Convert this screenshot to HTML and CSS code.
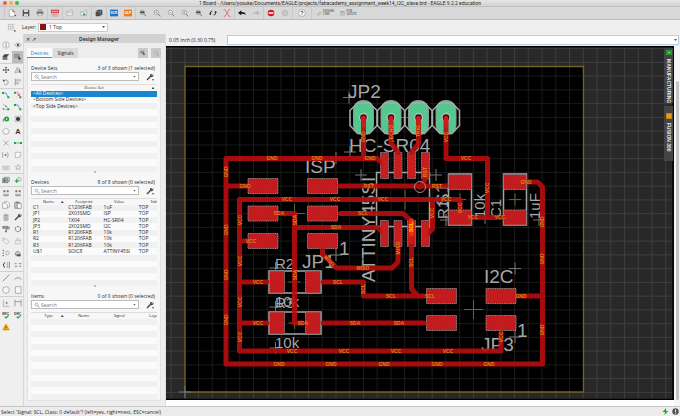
FILE: index.html
```html
<!DOCTYPE html>
<html lang="en">
<head>
<meta charset="utf-8">
<title>1 Board - EAGLE 9.2.2 education</title>
<link rel="stylesheet" href="styles.css">
</head>
<body>
<svg class="defs" aria-hidden="true">
  <defs>
    <symbol id="doc" viewBox="0 0 12 12"><path d="M2 1h5l3 3v7H2z" fill="#fafafa" stroke="#888" stroke-width=".7"/><path d="M7 1v3h3" fill="none" stroke="#555"/><path d="M9.500 9l2.500 0-1.200 2z" fill="#222"/></symbol>
    <symbol id="save" viewBox="0 0 12 12"><path d="M1 1h9l1 1v9H1z" fill="#555"/><path d="M3 1h6v3.500H3zM3 7h6v4H3z" fill="#d8d8d8"/></symbol>
    <symbol id="print" viewBox="0 0 12 12"><path d="M3 1h6v3H3z" fill="#bbb" stroke="#777" stroke-width=".6"/><path d="M1 4h10v4H1z" fill="#777"/><path d="M3 7h6v3H3z" fill="#eee" stroke="#777" stroke-width=".6"/></symbol>
    <symbol id="cam" viewBox="0 0 12 12"><path d="M0 1h12v5H0z" fill="#d8434a"/><path d="M2 2.500h2v2H2zM5 2.500h2v2H5zM8 2.500h2v2H8z" fill="#f2d2d2"/><path d="M1 6h10v5H1z" fill="#e6dada" stroke="#c88" stroke-width=".6"/><path d="M4 6v5M7.500 6v5M1 8.500h10" stroke="#c55" stroke-width=".6"/></symbol>
    <symbol id="folder" viewBox="0 0 12 12"><path d="M1 10V4l6-1 1-2 2 1v8z" fill="#e6e6e6" stroke="#999" stroke-width=".7"/><path d="M1 5h9" stroke="#aaa" stroke-width=".6"/></symbol>
    <symbol id="foldergo" viewBox="0 0 12 12"><use href="#folder"/><path d="M5 6l4 2.200L5 10.500z" fill="#1ca04c"/></symbol>
    <symbol id="book" viewBox="0 0 12 12"><path d="M1 4l3-3h7v7l-3 3H1z" fill="#4a4a4a"/><path d="M1 4h7v7M8 4l3-3" fill="none" stroke="#bbb" stroke-width=".6"/></symbol>
    <symbol id="scr" viewBox="0 0 12 12"><path d="M0 1h12v10H0z" fill="#1c75c4"/><text x="6" y="8" class="tag">SCR</text></symbol>
    <symbol id="ulp" viewBox="0 0 12 12"><path d="M0 1h12v10H0z" fill="#ee7d1c"/><text x="6" y="8" class="tag">ULP</text></symbol>
    <symbol id="zoom" viewBox="0 0 12 12"><circle cx="5" cy="5" r="3.300" fill="#eee" stroke="#777" stroke-width=".8"/><path d="M7.500 7.500L11 11" stroke="#666" stroke-width="1.200"/></symbol>
    <symbol id="zoomfit" viewBox="0 0 12 12"><use href="#zoom"/><path d="M2 3.500h6v3H2z" fill="#444"/></symbol>
    <symbol id="zoomin" viewBox="0 0 12 12"><use href="#zoom"/><path d="M3.500 5h3M5 3.500v3" stroke="#666" stroke-width=".7"/></symbol>
    <symbol id="zoomout" viewBox="0 0 12 12"><use href="#zoom"/><path d="M3.500 5h3" stroke="#666" stroke-width=".7"/></symbol>
    <symbol id="refresh" viewBox="0 0 12 12"><path d="M2 8V6a3 3 0 0 1 3-3M10 4v2a3 3 0 0 1-3 3" fill="none" stroke="#333" stroke-width="1.400"/><path d="M0 6.500h4L2 9.500zM8 5.500h4L10 2.500z" fill="#333"/></symbol>
    <symbol id="rats" viewBox="0 0 12 12"><path d="M1 1h2l6 10h2M1 11h2L9 1h2" fill="none" stroke="#e0584f" stroke-width="1.100"/></symbol>
    <symbol id="undo" viewBox="0 0 12 12"><path d="M0 6l5-4v2.500c4 0 6 1 7 4.500-2-2-4-2-7-2V9.500z" fill="#111"/></symbol>
    <symbol id="redo" viewBox="0 0 12 12"><path d="M12 6L7 2v2.500C3 4.500 1 5.500 0 9c2-2 4-2 7-2v2.500z" fill="#bbb"/></symbol>
    <symbol id="stop" viewBox="0 0 12 12"><circle cx="6" cy="6" r="5" fill="#d9131f"/><path d="M2.500 4.800h7v2.400h-7z" fill="#fff"/></symbol>
    <symbol id="go" viewBox="0 0 12 12"><circle cx="6" cy="6" r="4.500" fill="#c6c6c6" stroke="#b5b5b5"/></symbol>
    <symbol id="help" viewBox="0 0 12 12"><circle cx="6" cy="6" r="5" fill="#fff" stroke="#777" stroke-width=".7"/><text x="6" y="9" class="qm">?</text></symbol>
    <symbol id="grid" viewBox="0 0 12 12"><path d="M2 1v9M5 1v9M8 1v9M1 2h9M1 5h9M1 8h9" stroke="#c2c2c2" stroke-width="1"/><path d="M9 10h3l-1.500 2z" fill="#222"/></symbol>
    <symbol id="link" viewBox="0 0 12 12"><path d="M2 9l3-3M5 4l3-2 2 2-2 3-2 1M6 5L3 6 1 9l2 2 3-2" fill="none" stroke="#888" stroke-width=".9"/></symbol>
    <symbol id="sheet" viewBox="0 0 12 12"><path d="M1 1h10v2H1z" fill="#777"/><path d="M1 3v8h10V3M1 6h10M1 8.500h10M4.500 3v8" fill="none" stroke="#999" stroke-width=".7"/></symbol>
    <symbol id="info" viewBox="0 0 12 12"><circle cx="6" cy="6" r="4.800" fill="#fafafa" stroke="#777" stroke-width=".7"/><path d="M6 3v1.200M6 5.200V9" stroke="#444" stroke-width="1"/></symbol>
    <symbol id="eye" viewBox="0 0 12 12"><path d="M1 6q5-6 10 0-5 6-10 0z" fill="#eee" stroke="#777" stroke-width=".7"/><circle cx="6" cy="6" r="1.900" fill="#555"/></symbol>
    <symbol id="layers" viewBox="0 0 12 12"><path d="M1 5l3-3h7L8 5zM1 5h7v5H1z" fill="#444"/><path d="M1 7l7 0 3-3M1 9h7" fill="none" stroke="#ddd" stroke-width=".7"/></symbol>
    <symbol id="pick" viewBox="0 0 12 12"><path d="M1 2h7v5H1z" fill="#999" stroke="#777" stroke-width=".7"/><path d="M6 5l5 4-2.500.2L7.500 11z" fill="#222"/></symbol>
    <symbol id="move" viewBox="0 0 12 12"><path d="M6 2v8M2 6h8" stroke="#333" stroke-width="1"/><path d="M4.500 3L6 1l1.500 2zM4.500 9L6 11l1.500-2zM3 4.500L1 6l2 1.500zM9 4.500L11 6 9 7.500z" fill="#333"/></symbol>
    <symbol id="mirror" viewBox="0 0 12 12"><path d="M5 2v8H1z" fill="#ddd" stroke="#777" stroke-width=".6"/><path d="M7 2v8h4z" fill="#777"/></symbol>
    <symbol id="rotate" viewBox="0 0 12 12"><path d="M3 4a3.600 3.600 0 1 1 0 5" fill="none" stroke="#777" stroke-width="1"/><path d="M1 2l1 4 3-2z" fill="#555"/></symbol>
    <symbol id="align" viewBox="0 0 12 12"><path d="M2 1v10" stroke="#777"/><path d="M3 2.500h7v2H3zM3 7h4v2H3z" fill="#ddd" stroke="#888" stroke-width=".6"/></symbol>
    <symbol id="route" viewBox="0 0 12 12"><path d="M2 3h4l3 6" fill="none" stroke="#2c8fc0" stroke-width="1.100"/><path d="M0 1.500h3v3H0zM8 8h3v3H8z" fill="#19a63b"/></symbol>
    <symbol id="ripup" viewBox="0 0 12 12"><path d="M2 2h4l3 6" fill="none" stroke="#999"/><path d="M0 1h3v3H0zM8 8h3v3H8z" fill="#19a63b"/><path d="M5 4l4 4M9 4L5 8" stroke="#d22"/></symbol>
    <symbol id="fan" viewBox="0 0 12 12"><path d="M2 2l4 3M2 9l7 1M6 5l3 3" fill="none" stroke="#777" stroke-width=".8"/><path d="M5 4h2v2H5zM8 8h3v3H8z" fill="#19a63b"/><path d="M1 8h2v2H1z" fill="#2c7fd0"/></symbol>
    <symbol id="via" viewBox="0 0 12 12"><path d="M2 10Q1 4 6 5" fill="none" stroke="#d33" stroke-width="1.200"/><circle cx="7" cy="6" r="3.800" fill="#19a63b"/><circle cx="7" cy="6" r="1.200" fill="#fff"/></symbol>
    <symbol id="hole" viewBox="0 0 12 12"><path d="M1.500 1.500h9v9h-9z" fill="#ddd" stroke="#999" stroke-width=".6"/><circle cx="6" cy="6" r="3" fill="#333"/></symbol>
    <symbol id="poly" viewBox="0 0 12 12"><path d="M6 1.500l5 3.800-2 5.200H3L1 5.300z" fill="#f6f6f6" stroke="#888" stroke-width=".8"/></symbol>
    <symbol id="text" viewBox="0 0 12 12"><text x="6" y="10" class="bigA">A</text></symbol>
    <symbol id="split" viewBox="0 0 12 12"><path d="M2 2l3 3h2l3-3M2 10l3-3h2l3 3M6 5v2" fill="none" stroke="#888" stroke-width=".9"/></symbol>
    <symbol id="wire" viewBox="0 0 12 12"><path d="M2 6h8" stroke="#19a63b"/><path d="M0 4.500h3v3H0zM9 4.500h3v3H9z" fill="#19a63b"/></symbol>
    <symbol id="paren" viewBox="0 0 12 12"><path d="M1 2v8M3 6h3M8 2q3 4 0 8" fill="none" stroke="#777" stroke-width=".9"/><path d="M5 4.500L7.500 6 5 7.500z" fill="#555"/></symbol>
    <symbol id="miter" viewBox="0 0 12 12"><path d="M2 2h8v4l-4 4H2z" fill="#f6f6f6" stroke="#888" stroke-width=".7"/><path d="M6 10h4V6" fill="none" stroke="#aaa" stroke-width=".6"/></symbol>
    <symbol id="mesh" viewBox="0 0 12 12"><path d="M1 9V5h3v4M6 9V3M8 9V5h3v4M1 10h10" fill="none" stroke="#999" stroke-width=".8"/></symbol>
    <symbol id="star" viewBox="0 0 12 12"><path d="M6 2l1.300 2.800 3 .3-2.200 2 .7 3L6 8.500 3.200 10l.7-3-2.200-2 3-.2z" fill="#eee" stroke="#888" stroke-width=".7"/></symbol>
    <symbol id="addstack" viewBox="0 0 12 12"><path d="M3 2h8v6H3z" fill="#eee" stroke="#555" stroke-width=".8"/><path d="M1 4h8v6H1z" fill="#aaa" stroke="#555" stroke-width=".8"/><path d="M4 4.500v5M1.500 7h5" stroke="#19a63b" stroke-width="1.500"/></symbol>
    <symbol id="addpart" viewBox="0 0 12 12"><path d="M6 2q5 0 5 3t-5 3z" fill="#eee" stroke="#888" stroke-width=".8"/><path d="M4 4.500v6M1 7.500h6" stroke="#19a63b" stroke-width="1.500"/></symbol>
    <symbol id="names" viewBox="0 0 12 12"><path d="M2 2h3v3H2zM7 2h3v3H7z" fill="#777"/><path d="M2 8h2M5 8h2M8 8h2M2 10h8" stroke="#555"/></symbol>
    <symbol id="copy" viewBox="0 0 12 12"><path d="M4 1h4l3 3v5H4z" fill="#fafafa" stroke="#777" stroke-width=".8"/><path d="M1 3h4l3 3v5H1z" fill="#fafafa" stroke="#777" stroke-width=".8"/></symbol>
    <symbol id="paste" viewBox="0 0 12 12"><path d="M1 2h8v9H1z" fill="#bbb" stroke="#777" stroke-width=".8"/><path d="M5 4h6v7H5z" fill="#fafafa" stroke="#777" stroke-width=".8"/><path d="M3 1h4v2H3z" fill="#777"/></symbol>
    <symbol id="trash" viewBox="0 0 12 12"><path d="M3 4h6v7H3z" fill="#ddd" stroke="#777" stroke-width=".8"/><path d="M2 3h8M5 1.500h2M5 5v5M7 5v5" stroke="#777" stroke-width=".8"/></symbol>
    <symbol id="wrench" viewBox="0 0 12 12"><path d="M1.500 10.500L7 5" stroke="#444" stroke-width="2"/><path d="M10 1L8 3l1 1 2-2q1 3-1.500 4T6 4t4-3z" fill="#444"/></symbol>
    <symbol id="options" viewBox="0 0 12 12"><use href="#wrench"/><path d="M9 9.500h3l-1.500 2z" fill="#222"/></symbol>
    <symbol id="paint" viewBox="0 0 12 12"><path d="M1 2h8v3H1z" fill="#999" stroke="#555" stroke-width=".7"/><path d="M9 3h2v3H6v2" fill="none" stroke="#555" stroke-width=".8"/><path d="M5 8h2v3H5z" fill="#444"/></symbol>
    <symbol id="group" viewBox="0 0 12 12"><circle cx="6" cy="6" r="4" fill="none" stroke="#444" stroke-width="1.200" stroke-dasharray="3 1.200"/></symbol>
    <symbol id="tagic" viewBox="0 0 12 12"><path d="M1 2l4 0 6 5-4 4-6-5z" fill="#eee" stroke="#aaa" stroke-width=".8"/><circle cx="3.500" cy="4" r=".8" fill="#999"/></symbol>
    <symbol id="lock" viewBox="0 0 12 12"><path d="M2.500 5h7v5.500h-7z" fill="#eee" stroke="#aaa" stroke-width=".8"/><path d="M4 5V3q2-3 4 0v2" fill="none" stroke="#aaa" stroke-width=".9"/></symbol>
    <symbol id="swap" viewBox="0 0 12 12"><path d="M1 2h2M1 6h2M1 10h2" stroke="#333" stroke-width="1.200"/><path d="M6 3q5 0 5 3t-5 3z" fill="none" stroke="#888" stroke-width=".8"/></symbol>
    <symbol id="replace" viewBox="0 0 12 12"><path d="M2 9V6q4-5 7 0v4z" fill="#ccc" stroke="#555" stroke-width=".8"/><path d="M4 8h6v3H4z" fill="#555"/></symbol>
    <symbol id="pins" viewBox="0 0 12 12"><path d="M4 2q-4 4 0 8" fill="none" stroke="#222" stroke-width="1.300"/><path d="M7 3h2M7 6h2M7 9h2M11 1v10" stroke="#555"/></symbol>
    <symbol id="dashes" viewBox="0 0 12 12"><path d="M1 4h3M7 4h4M1 8h4M8 8h3" stroke="#666" stroke-width="1.100"/></symbol>
    <symbol id="line" viewBox="0 0 12 12"><path d="M1 11L11 1" stroke="#666" stroke-width="1"/></symbol>
    <symbol id="arc" viewBox="0 0 12 12"><path d="M1 8q5-5 10 0" fill="none" stroke="#666" stroke-width="1"/></symbol>
    <symbol id="circ" viewBox="0 0 12 12"><circle cx="6" cy="6" r="5" fill="#f6f6f6" stroke="#888" stroke-width=".9"/></symbol>
    <symbol id="rect" viewBox="0 0 12 12"><path d="M2 1h8.500v10H2z" fill="#f6f6f6" stroke="#888" stroke-width=".9"/></symbol>
    <symbol id="mark" viewBox="0 0 12 12"><path d="M2 1v10h9" fill="none" stroke="#888" stroke-width=".8"/><path d="M7 4v4M5 6h4" stroke="#666" stroke-width=".9"/></symbol>
    <symbol id="dim" viewBox="0 0 12 12"><path d="M1.500 1v10M10.500 1v10M2 4h8" stroke="#666" stroke-width=".9"/></symbol>
    <symbol id="erc" viewBox="0 0 12 12"><text x="5.500" y="6" class="rc">ERC</text><path d="M4 8.500l2 2 4-4" fill="none" stroke="#19a63b" stroke-width="1.800"/></symbol>
    <symbol id="drc" viewBox="0 0 12 12"><text x="5.500" y="6" class="rc">DRC</text><path d="M4 8.500l2 2 4-4" fill="none" stroke="#19a63b" stroke-width="1.800"/></symbol>
    <symbol id="warn" viewBox="0 0 12 12"><path d="M6 1.500l5 9H1z" fill="#f5a800" stroke="#e09000" stroke-width="1"/><path d="M6 4.500v3M6 8.500v1" stroke="#333" stroke-width="1"/></symbol>
    <symbol id="bolt" viewBox="0 0 12 12"><path d="M7 0L1 7h4l-1 5 7-7H7z" fill="#22a83c"/></symbol>
    <symbol id="alert" viewBox="0 0 12 12"><circle cx="6" cy="6" r="5.500" fill="#555"/><path d="M6 2.500v4.500M6 8v1.800" stroke="#fff" stroke-width="1.500"/></symbol>
    <pattern id="hatch" width="2" height="2" patternUnits="userSpaceOnUse" patternTransform="rotate(45)"><path d="M0 0h2v2H0z" fill="#c91f22"/><path d="M0 0v2" stroke="#ad1113" stroke-width="1"/></pattern>
    <pattern id="green" width="2" height="2" patternUnits="userSpaceOnUse" patternTransform="rotate(45)"><path d="M0 0h2v2H0z" fill="#5fcf97"/><path d="M0 0v2" stroke="#32b078" stroke-width="1"/></pattern>
    <pattern id="mesh14" x="184.300" y="61.900" width="13.740" height="13.750" patternUnits="userSpaceOnUse"><path d="M.5 0v13.750M0 .5h13.740" stroke="#fff" stroke-opacity=".1" stroke-width="1" fill="none"/></pattern>
    <path id="smd" d="M-15 -7.500h30v15h-30z"/>
    <path id="soic" d="M-4 -13h8v26h-8z"/>
    <path id="chipH" d="M-8 -11h15v22h-15z"/>
    <path id="chipV" d="M-11.500 -7.500h23v15h-23z"/>
    <g id="pin"><rect x="-10" y="-17" width="20" height="34" rx="9" fill="url(#green)" stroke="#8a9a90" stroke-width="1"/><path d="M-6-14.500H6L13.500-7V8L6 16H-6L-13.500 8V-7z" fill="none" stroke="#aaa" stroke-width="1.500"/><circle r="4" fill="#201010" stroke="#bbb" stroke-width="1.500"/></g>
    <path id="cross" d="M-6 0H6M0-6V6"/>
  </defs>
</svg>

<div class="app">
  <header class="titlebar">
    <span class="lights"><i class="red"></i><i class="yellow"></i><i class="green"></i></span>
    <h1>1 Board - /Users/yosuke/Documents/EAGLE/projects/fabacademy_assignment_week14_I2C_slave.brd - EAGLE 9.2.2 education</h1>
  </header>

  <nav class="toolbar" aria-label="Main toolbar">
    <div class="group"><button aria-label="New"><svg><use href="#doc"/></svg></button><button aria-label="Save"><svg><use href="#save"/></svg></button><button aria-label="Print"><svg><use href="#print"/></svg></button></div>
    <div class="group"><button aria-label="CAM"><svg><use href="#cam"/></svg></button></div>
    <div class="group"><button aria-label="Open"><svg><use href="#folder"/></svg></button><button aria-label="Switch"><svg><use href="#foldergo"/></svg></button></div>
    <div class="group"><button aria-label="Library"><svg><use href="#book"/></svg></button></div>
    <div class="group"><button aria-label="Script"><svg><use href="#scr"/></svg></button><button aria-label="ULP"><svg><use href="#ulp"/></svg></button></div>
    <div class="group"><button aria-label="Fit"><svg><use href="#zoomfit"/></svg></button><button aria-label="Zoom in"><svg><use href="#zoomin"/></svg></button><button aria-label="Zoom out"><svg><use href="#zoomout"/></svg></button><button aria-label="Redraw"><svg><use href="#zoomin"/></svg></button><button aria-label="Select zoom"><svg><use href="#zoomfit"/></svg></button><button aria-label="Refresh"><svg><use href="#refresh"/></svg></button><button aria-label="Ratsnest"><svg><use href="#rats"/></svg></button></div>
    <div class="group"><button aria-label="Undo"><svg><use href="#undo"/></svg></button><button aria-label="Redo"><svg><use href="#redo"/></svg></button></div>
    <div class="group"><button aria-label="Stop"><svg><use href="#stop"/></svg></button><button aria-label="Go"><svg><use href="#go"/></svg></button></div>
    <div class="group wide"><button aria-label="Help"><svg><use href="#help"/></svg></button></div>
    <div class="group wide"><button class="labelled"><svg><use href="#link"/></svg><span>DESIGN<br>LINK</span></button><button class="labelled"><svg><use href="#sheet"/></svg><span>PCB<br>QUOTE</span></button></div>
  </nav>

  <div class="params">
    <button aria-label="Grid"><svg><use href="#grid"/></svg></button>
    <label for="layer">Layer:</label>
    <span class="layer"><i class="swatch"></i><select id="layer"><option>1 Top</option></select></span>
  </div>

  <div class="main">
    <aside class="palette" aria-label="Tools">
      <div class="tools"><button aria-label="Info"><svg><use href="#info"/></svg></button><button aria-label="Show"><svg><use href="#eye"/></svg></button><button aria-label="Layers"><svg><use href="#layers"/></svg></button><button class="on" aria-label="Select"><svg><use href="#pick"/></svg></button></div>
      <div class="tools"><button aria-label="Move"><svg><use href="#move"/></svg></button><button aria-label="Mirror"><svg><use href="#mirror"/></svg></button><button aria-label="Rotate"><svg><use href="#rotate"/></svg></button><button aria-label="Align"><svg><use href="#align"/></svg></button></div>
      <div class="tools"><button aria-label="Route"><svg><use href="#route"/></svg></button><button aria-label="Ripup"><svg><use href="#ripup"/></svg></button><button aria-label="Fanout"><svg><use href="#fan"/></svg></button><button aria-label="Multi route"><svg><use href="#route"/></svg></button><button aria-label="Via"><svg><use href="#via"/></svg></button><button aria-label="Hole"><svg><use href="#hole"/></svg></button><button aria-label="Polygon"><svg><use href="#poly"/></svg></button><button aria-label="Text"><svg><use href="#text"/></svg></button><button aria-label="Split"><svg><use href="#split"/></svg></button><button aria-label="Signal"><svg><use href="#wire"/></svg></button><button aria-label="Slice"><svg><use href="#paren"/></svg></button><button aria-label="Miter"><svg><use href="#miter"/></svg></button><button aria-label="Meander"><svg><use href="#mesh"/></svg></button><button aria-label="Optimize"><svg><use href="#star"/></svg></button></div>
      <div class="tools"><button aria-label="Add block"><svg><use href="#addstack"/></svg></button><button aria-label="Add part"><svg><use href="#addpart"/></svg></button></div>
      <div class="tools"><button aria-label="Name"><svg><use href="#names"/></svg></button><button aria-label="Value"><svg><use href="#names"/></svg></button><button aria-label="Copy"><svg><use href="#copy"/></svg></button><button aria-label="Paste"><svg><use href="#paste"/></svg></button><button aria-label="Delete"><svg><use href="#trash"/></svg></button><button aria-label="Change"><svg><use href="#wrench"/></svg></button><button aria-label="Paint"><svg><use href="#paint"/></svg></button><button aria-label="Group"><svg><use href="#group"/></svg></button><button aria-label="Attribute"><svg><use href="#tagic"/></svg></button><button aria-label="Lock"><svg><use href="#lock"/></svg></button><button aria-label="Pin swap"><svg><use href="#swap"/></svg></button><button aria-label="Replace"><svg><use href="#replace"/></svg></button><button aria-label="Smash"><svg><use href="#pins"/></svg></button><button aria-label="Arrange"><svg><use href="#dashes"/></svg></button></div>
      <div class="tools"><button aria-label="Line"><svg><use href="#line"/></svg></button><button aria-label="Arc"><svg><use href="#arc"/></svg></button><button aria-label="Circle"><svg><use href="#circ"/></svg></button><button aria-label="Rectangle"><svg><use href="#rect"/></svg></button></div>
      <div class="tools"><button aria-label="Mark"><svg><use href="#mark"/></svg></button><button aria-label="Dimension"><svg><use href="#dim"/></svg></button><button aria-label="ERC"><svg><use href="#erc"/></svg></button><button aria-label="DRC"><svg><use href="#drc"/></svg></button><button aria-label="Errors"><svg><use href="#warn"/></svg></button></div>
    </aside>

    <aside class="manager">
      <div class="caption"><button aria-label="Close">✕</button><button aria-label="Detach">↗</button><h2>Design Manager</h2></div>
      <div class="tabs"><button class="active">Devices</button><button>Signals</button><span class="spacer"></span><button class="sq" aria-label="Pick"><svg><use href="#pick"/></svg></button><button class="sq" aria-label="Zoom to"><svg><use href="#zoomin"/></svg></button></div>
      <div class="sections">
        <section>
          <div class="head"><h3>Device Sets</h3><span>3 of 3 shown (1 selected)</span></div>
          <div class="find"><div class="box"><svg><use href="#zoom"/></svg><input type="search" placeholder="Search" aria-label="Search device sets"><b></b></div><button aria-label="Options"><svg><use href="#options"/></svg></button></div>
          <div class="list"><table>
            <thead><tr><th>Device Set <em>▲</em></th></tr></thead>
            <tbody><tr class="sel"><td>&lt;All Devices&gt;</td></tr><tr><td>&lt;Bottom Side Devices&gt;</td></tr><tr><td>&lt;Top Side Devices&gt;</td></tr><tr><td></td></tr><tr><td></td></tr><tr><td></td></tr><tr><td></td></tr><tr><td></td></tr><tr><td></td></tr><tr><td></td></tr><tr><td></td></tr><tr><td></td></tr><tr><td></td></tr></tbody>
          </table></div>
          <i class="grip"></i>
        </section>
        <section>
          <div class="head"><h3>Devices</h3><span>8 of 8 shown (0 selected)</span></div>
          <div class="find"><div class="box"><svg><use href="#zoom"/></svg><input type="search" placeholder="Search" aria-label="Search devices"><b></b></div><button aria-label="Options"><svg><use href="#options"/></svg></button></div>
          <div class="list"><table class="cols">
            <thead><tr><th>Name <em>▲</em></th><th>Footprint</th><th>Value</th><th>Side</th></tr></thead>
            <tbody>
              <tr><td>C1</td><td>C1206FAB</td><td>1uF</td><td>TOP</td></tr>
              <tr><td>JP1</td><td>2X03SMD</td><td>ISP</td><td>TOP</td></tr>
              <tr><td>JP2</td><td>1X04</td><td>HC-SR04</td><td>TOP</td></tr>
              <tr><td>JP3</td><td>2X02SMD</td><td>I2C</td><td>TOP</td></tr>
              <tr><td>R1</td><td>R1206FAB</td><td>10k</td><td>TOP</td></tr>
              <tr><td>R2</td><td>R1206FAB</td><td>10k</td><td>TOP</td></tr>
              <tr><td>R3</td><td>R1206FAB</td><td>10k</td><td>TOP</td></tr>
              <tr><td>U$1</td><td>SOIC8</td><td>ATTINY45SI</td><td>TOP</td></tr>
              <tr><td colspan="4"></td></tr><tr><td colspan="4"></td></tr><tr><td colspan="4"></td></tr><tr><td colspan="4"></td></tr><tr><td colspan="4"></td></tr>
            </tbody>
          </table></div>
          <i class="grip"></i>
        </section>
        <section>
          <div class="head"><h3>Items</h3><span>0 of 0 shown (0 selected)</span></div>
          <div class="find"><div class="box"><svg><use href="#zoom"/></svg><input type="search" placeholder="Search" aria-label="Search items"><b></b></div><button aria-label="Options"><svg><use href="#options"/></svg></button></div>
          <div class="list"><table class="cols">
            <thead><tr><th>Type <em>▲</em></th><th>Name</th><th>Signal</th><th>Layer</th></tr></thead>
            <tbody><tr><td colspan="4"></td></tr><tr><td colspan="4"></td></tr><tr><td colspan="4"></td></tr><tr><td colspan="4"></td></tr><tr><td colspan="4"></td></tr><tr><td colspan="4"></td></tr><tr><td colspan="4"></td></tr><tr><td colspan="4"></td></tr><tr><td colspan="4"></td></tr><tr><td colspan="4"></td></tr><tr><td colspan="4"></td></tr><tr><td colspan="4"></td></tr><tr><td colspan="4"></td></tr></tbody>
          </table></div>
        </section>
      </div>
    </aside>

    <main class="editor">
      <div class="command"><label for="cmd">0.05 inch (0.30 0.75)</label><div class="cmdbox"><input id="cmd" type="text"><b></b></div></div>
      <div class="work">
        <div class="canvas">
          <svg class="board" viewBox="166 46 508 354" preserveAspectRatio="xMinYMin slice" role="img" aria-label="PCB layout">
            <path d="M166 46h508v354H166z" fill="#282828"/>
            <path d="M185 66h398v326H185z" fill="#000"/>
            <path d="M166 46h508v354H166z" fill="url(#mesh14)"/>
            <path d="M185 66.500h398.500V392H185z" fill="none" stroke="#74611f" stroke-width="1.300"/>
            <path d="M166 46.500h508M673 46v354M166 399.500h508" stroke="#000" stroke-width="1.500"/>

            <g fill="none" stroke="#a5a5a5" stroke-width="1.500">
              <path d="M376.500 172.500h53v54h-53zM269 271h52v22h-52zM269 312h52v22h-52zM448.500 174h23v51h-23zM503.500 174h23v51h-23z"/>
            </g>
            <g stroke="#777" stroke-width="1">
              <use href="#cross" x="349" y="97.500"/><use href="#cross" x="350" y="152"/><use href="#cross" x="361" y="175"/><use href="#cross" x="436" y="175"/><use href="#cross" x="336" y="158"/><use href="#cross" x="336" y="255"/><use href="#cross" x="275.500" y="268"/><use href="#cross" x="275.500" y="307"/><use href="#cross" x="275.500" y="348"/><use href="#cross" x="515" y="268.500"/><use href="#cross" x="515" y="337"/><use href="#cross" x="446" y="220"/><use href="#cross" x="485" y="218"/><use href="#cross" x="539" y="220"/><use href="#cross" x="185" y="392"/>
            </g>
            <g stroke="#5c6a22" stroke-width="1">
              <use href="#cross" x="515" y="199.500"/><use href="#cross" x="460" y="199.500"/><use href="#cross" x="294.500" y="282"/><use href="#cross" x="294.500" y="323"/>
              <path d="M464 309.500h19M473.500 300v19M285 213.500h20M294.500 204v20M405 190v20M395 117.500h20"/>
            </g>
            <g class="silk">
              <text x="348" y="98">JP2</text><text x="349" y="152">HC-SR04</text><text x="305" y="173">ISP</text><text x="302" y="268">JP1</text><text x="339" y="255">1</text><text x="484" y="283">I2C</text><text x="517" y="337">1</text><text x="481" y="351">JP3</text>
              <text transform="translate(375 282) rotate(-90)">ATTINY45SI</text><text transform="translate(449 206) rotate(-90)">S1</text>
            </g>
            <g class="silk small">
              <text x="275" y="269">R2</text><text x="275" y="308">R3</text><text x="275" y="307">10k</text><text x="275" y="348">10k</text>
              <text transform="translate(448 219) rotate(-90)">R1</text><text transform="translate(485 218) rotate(-90)">10k</text><text transform="translate(501 218) rotate(-90)">C1</text><text transform="translate(540 219) rotate(-90)">1uF</text>
            </g>

            <use href="#pin" x="363.500" y="117.500"/><use href="#pin" x="391" y="117.500"/><use href="#pin" x="418.500" y="117.500"/><use href="#pin" x="446" y="117.500"/>

            <g fill="url(#hatch)" stroke="#8f8585" stroke-width="1" stroke-dasharray="1.200 .6">
              <use href="#smd" x="263" y="186"/><use href="#smd" x="263" y="213.500"/><use href="#smd" x="263" y="241"/>
              <use href="#smd" x="322.500" y="186"/><use href="#smd" x="322.500" y="213.500"/><use href="#smd" x="322.500" y="241"/>
              <use href="#smd" x="441.500" y="296"/><use href="#smd" x="441.500" y="323"/><use href="#smd" x="501" y="296"/><use href="#smd" x="501" y="323"/>
              <use href="#chipH" x="277.500" y="282"/><use href="#chipH" x="313.500" y="282"/><use href="#chipH" x="277.500" y="323"/><use href="#chipH" x="313.500" y="323"/>
              <use href="#chipV" x="460" y="182"/><use href="#chipV" x="460" y="217.500"/><use href="#chipV" x="515" y="182"/><use href="#chipV" x="515" y="217.500"/>
              <use href="#soic" x="384.500" y="165.500"/><use href="#soic" x="398" y="165.500"/><use href="#soic" x="411.500" y="165.500"/><use href="#soic" x="425.500" y="165.500"/>
              <use href="#soic" x="384.500" y="233.500"/><use href="#soic" x="398" y="233.500"/><use href="#soic" x="411.500" y="233.500"/><use href="#soic" x="425.500" y="233.500"/>
            </g>

            <g class="trace">
              <path d="M382 163l-5-4.500H226V364h316.500V187l-5-5H528M226 186h21M518 296h24"/>
              <path d="M460 208v-8.500H239.500V351H501V333M239.500 282H267M239.500 323H267M239.500 241H246M432.500 199.500V229l-5 5M446 118v40.500h41.500V217.500M474 217.500h28"/>
              <path d="M340 186H446M420 187l5.500-8M363.500 118v40M391 118v25l7 9M418.500 118v26l-7 8"/>
              <path d="M280 213.500h14.500V323h8M294.500 227.500H378l5 5M340 213.500h63l8.500 7.500V289l6 7M322.500 250v4l14 14H392l6-6V248M323 282h40.500v14H424M323 323H424"/>
            </g>
            <circle cx="420" cy="187" r="5.500" fill="none" stroke="#b98080" stroke-width="1"/>
            <g fill="#c91f22" opacity=".75"><path d="M381.500 155h6v22h-6zM395 155h6v22h-6zM408.500 155h6v22h-6zM422.500 155h6v22h-6zM381.500 223h6v21h-6zM395 223h6v21h-6zM408.500 236h6v8h-6zM422.500 223h6v21h-6z"/></g>
            <g stroke="#cc1c1c" stroke-width="4" stroke-linecap="round"><path d="M363.500 118v8M391 118v8M418.500 118v8M446 118v8"/></g>
            <path d="M411.500 221v13" stroke="#ff2a00" stroke-width="5" stroke-linecap="round"/>

            <g class="net">
              <text x="272" y="160">GND</text><text x="317" y="160">GND</text><text x="370" y="160">GND</text><text x="245" y="188">GND</text><text x="526" y="184">GND</text><text x="521" y="298">GND</text><text x="279" y="366">GND</text><text x="331" y="366">GND</text><text x="384" y="366">GND</text><text x="437" y="366">GND</text><text x="489" y="366">GND</text>
              <text x="287" y="201">VCC</text><text x="335" y="201">VCC</text><text x="383" y="201">VCC</text><text x="446" y="201">VCC</text><text x="466" y="160">VCC</text><text x="473" y="219">VCC</text><text x="500" y="219">VCC</text><text x="251" y="243">VCC</text><text x="258" y="284">VCC</text><text x="258" y="325">VCC</text><text x="292" y="353">VCC</text><text x="344" y="353">VCC</text><text x="396" y="353">VCC</text><text x="448" y="353">VCC</text>
              <text x="279" y="215">SDA</text><text x="336" y="229">SDA</text><text x="303" y="325">SDA</text><text x="355" y="325">SDA</text><text x="399" y="325">SDA</text><text x="338" y="284">SCL</text><text x="391" y="298">SCL</text><text x="430" y="298">SCL</text><text x="363" y="270">MISO</text><text x="369" y="188">RST</text><text x="437" y="188">RST</text><text x="363" y="215">SCL</text>
              <g>
                <text transform="translate(228 172) rotate(-90)">GND</text><text transform="translate(228 230) rotate(-90)">GND</text><text transform="translate(228 275) rotate(-90)">GND</text><text transform="translate(228 320) rotate(-90)">GND</text>
                <text transform="translate(242 220) rotate(-90)">VCC</text><text transform="translate(242 261) rotate(-90)">VCC</text><text transform="translate(242 302) rotate(-90)">VCC</text><text transform="translate(242 337) rotate(-90)">VCC</text>
                <text transform="translate(297 220) rotate(-90)">SDA</text><text transform="translate(297 275) rotate(-90)">SDA</text><text transform="translate(365 289) rotate(-90)">SCL</text><text transform="translate(413 262) rotate(-90)">SCL</text><text transform="translate(400 248) rotate(-90)">MISO</text>
                <text transform="translate(365 137) rotate(-90)">GND</text><text transform="translate(393 132) rotate(-90)">ECHO</text><text transform="translate(420 131) rotate(-90)">TRIG</text><text transform="translate(448 137) rotate(-90)">VCC</text><text transform="translate(427 172) rotate(-90)">RST</text>
                <text transform="translate(434 213) rotate(-90)">VCC</text><text transform="translate(462 208) rotate(-90)">VCC</text><text transform="translate(489 188) rotate(-90)">VCC</text><text transform="translate(544 222) rotate(-90)">GND</text><text transform="translate(544 259) rotate(-90)">GND</text><text transform="translate(544 330) rotate(-90)">GND</text><text transform="translate(503 337) rotate(-90)">VCC</text><text transform="translate(328 262) rotate(45)">MISO</text>
              </g>
              <text class="hot" transform="translate(413 227) rotate(-90)">SCL</text>
            </g>
          </svg>
          <div class="sidetabs">
            <button><i class="chip mfg"></i>MANUFACTURING</button>
            <button><i class="chip fus"></i>FUSION 360</button>
          </div>
        </div>
        <div class="vscroll"><i></i></div>
      </div>
    </main>
  </div>

  <footer class="status"><span>Select 'Signal: SCL, Class: 0 default'? (left=yes, right=next, ESC=cancel)</span><span class="flags"><svg><use href="#bolt"/></svg><svg><use href="#alert"/></svg></span></footer>
</div>
</body>
</html>
```
FILE: styles.css
```css
* { box-sizing: border-box; }
body { margin: 0; font: 5px/6px "Open Sans", "Liberation Sans", sans-serif; color: #2a2a2a; background: #ececec; }
h1, h2, h3 { margin: 0; font-size: inherit; font-weight: normal; }
button, input, select { font: inherit; color: inherit; margin: 0; padding: 0; border: 0; background: none; border-radius: 0; appearance: none; outline: 0; }
svg { display: block; }
i, em { font-style: normal; }
.defs { position: absolute; width: 0; height: 0; }
.tag { font: bold 5px "Liberation Sans", sans-serif; fill: #fff; text-anchor: middle; }
.qm { font: bold 8px "Liberation Sans", sans-serif; fill: #444; text-anchor: middle; }
.bigA { font: bold 11px "Liberation Sans", sans-serif; fill: #333; text-anchor: middle; }
.rc { font: bold 5px "Liberation Sans", sans-serif; fill: #444; text-anchor: middle; }

.app { display: flex; flex-direction: column; height: 100vh; }
.titlebar { display: flex; align-items: center; justify-content: center; height: 7px; background: linear-gradient(#e6e6e6, #d2d2d2); border-bottom: 1px solid #c0c0c0; position: relative; font-family: Roboto, "Liberation Sans", sans-serif; }
.lights { position: absolute; left: 3px; top: 1px; display: flex; gap: 2px; }
.lights i { width: 4px; height: 4px; border-radius: 50%; }
.red { background: #f4574f; }
.yellow { background: #f5b42c; }
.green { background: #34c240; }

.toolbar { display: flex; height: 13px; padding-left: 4px; background: #d8d8d8; border-bottom: 1px solid #bdbdbd; }
.group { display: flex; align-items: center; border-left: 1px solid #c8c8c8; }
.group button { width: 14px; height: 12px; display: flex; align-items: center; justify-content: center; }
.group svg { width: 8px; height: 8px; }
.group.wide { padding: 0 2px; }
.group button.labelled { width: 23px; gap: 1px; font-size: 3px; line-height: 3px; text-align: left; }
.group .labelled svg { width: 5px; height: 5px; }

.params { display: flex; align-items: center; height: 14px; gap: 6px; padding-left: 7px; background: #efefef; }
.params button svg { width: 9px; height: 9px; }
.layer { display: flex; align-items: center; width: 70px; height: 9px; margin-left: -4px; background: #fff; border: 1px solid #ccc; padding: 0 2px 0 1px; }
.layer::after, .box b, .cmdbox b { content: ""; width: 3px; height: 2px; background: #555; clip-path: polygon(0 0, 100% 0, 50% 100%); }
.swatch { width: 6px; height: 6px; background: #8e1010; margin-right: 3px; }
.layer select { flex: 1; }

.main { flex: 1; display: flex; min-height: 0; }
.palette { width: 24px; padding-top: 5px; background: #efefef; border-right: 1px solid #d8d8d8; }
.tools { display: grid; grid-template-columns: 12px 11px; }
.tools + .tools { border-top: 1px solid #d0d0d0; }
.tools button { height: 12px; display: flex; align-items: center; justify-content: center; }
.tools svg { width: 8px; height: 8px; }
.tools .on { background: #bcbcbc; }

.manager { width: 142px; display: flex; flex-direction: column; background: #ededed; border-right: 1px solid #dcdcdc; }
.caption { display: flex; align-items: center; height: 9px; padding-left: 1px; background: #d2d2d2; }
.caption button { width: 6px; }
.caption h2 { flex: 1; text-align: center; margin-right: 4px; font: 6px/8px "Noto Sans", "Open Sans", sans-serif; font-size: 5px; font-weight: 600; }
.tabs { display: flex; align-items: end; height: 15px; padding: 0 3px; gap: 1px; }
.tabs button { width: 25px; height: 10px; background: #dadada; }
.tabs .active { background: #fafafa; color: #1c7fc7; border-bottom: 1px solid #3a92d2; }
.spacer { flex: 1; }
.tabs .sq { width: 10px; margin: 0 1px; display: grid; place-items: center; background: #cacaca; }
.sq svg { width: 6px; height: 6px; }
.sections { flex: 1; min-height: 0; display: grid; grid-template-rows: repeat(3, minmax(0, 1fr)); margin: 0 4px 5px 3px; background: #f7f7f7; border: 1px solid #e2e2e2; border-top: 0; }
section { position: relative; display: flex; flex-direction: column; padding: 6px 3px 0; min-height: 0; }
.head { display: flex; justify-content: space-between; height: 8px; line-height: 8px; padding-right: 2px; }
.find { display: flex; height: 9px; gap: 7px; margin-bottom: 3px; }
.box { display: flex; align-items: center; width: 108px; border: 1px solid #bbb; background: #fff; padding: 0 2px; }
.box svg { width: 6px; height: 6px; margin-right: 1px; }
.box input { flex: 1; min-width: 0; }
.box input::placeholder { color: #777; }
.find button svg { width: 8px; height: 8px; }
.list { flex: 1; min-height: 0; overflow: hidden; }
table { width: 100%; height: 100%; border-collapse: collapse; table-layout: fixed; }
table.cols { width: 112%; }
th { font-weight: normal; height: 6px; padding: 0; font-size: 4px; line-height: 5px; text-align: center; border-top: 1px solid #ddd; position: relative; }
th em { position: absolute; right: 2px; }
td { height: 6px; padding: 0 2px; line-height: 5px; white-space: nowrap; }
tbody tr:nth-child(odd) { background: #f1f1f1; }
tbody tr:nth-child(even) { background: #fbfbfb; }
tbody tr.sel { background: #1a86d0; color: #fff; }
.grip { position: absolute; bottom: -1px; left: 50%; width: 2px; height: 2px; border-radius: 50%; background: #aaa; }

.editor { flex: 1; min-width: 0; display: flex; flex-direction: column; background: #efefef; }
.command { display: flex; align-items: center; height: 12px; padding: 0 1px 0 3px; }
.command label { width: 58px; }
.cmdbox { flex: 1; display: flex; align-items: center; height: 10px; padding-right: 1px; background: #fff; border: 1px solid #b5cfe6; }
.cmdbox input { flex: 1; min-width: 0; }
.work { flex: 1; display: flex; min-height: 0; background: #fff; }
.canvas { flex: 1; min-width: 0; margin-bottom: 6px; position: relative; background: #282828; }
.board { width: 100%; height: 100%; }
.silk { font: 19px "Liberation Sans", sans-serif; fill: #a6a6a6; }
.small { font-size: 15px; }
.trace { fill: none; stroke: #b80c0e; stroke-opacity: .9; stroke-width: 5; stroke-linecap: round; stroke-linejoin: round; }
.net { font: bold 5px "Liberation Sans", sans-serif; fill: #d9861a; text-anchor: middle; }
.hot { fill: #ffe000; }
.sidetabs { position: absolute; top: 2px; right: 1px; display: flex; flex-direction: column; gap: 3px; }
.sidetabs button { writing-mode: vertical-rl; width: 9px; height: 55px; display: flex; align-items: center; gap: 4px; padding-top: 2px; background: #444; color: #eee; font: bold 5px/6px "Liberation Sans", sans-serif; }
.sidetabs button + button { padding-top: 7px; }
.chip { width: 6px; height: 6px; }
.mfg { background: #d3c93a; border: 2px solid #1f9c48; }
.fus { background: #f49a1a; border: 1px solid #d07c08; }
.vscroll { width: 6px; padding: 35px 1px 6px 2px; background: #f6f6f6; }
.vscroll i { display: block; height: 100%; background: #c4c4c4; border-radius: 2px; }

.status { display: flex; justify-content: space-between; align-items: center; height: 10px; padding: 0 1px; background: #ececec; border-top: 1px solid #c8c8c8; }
.flags { display: flex; gap: 3px; }
.flags svg { width: 7px; height: 7px; }
```
